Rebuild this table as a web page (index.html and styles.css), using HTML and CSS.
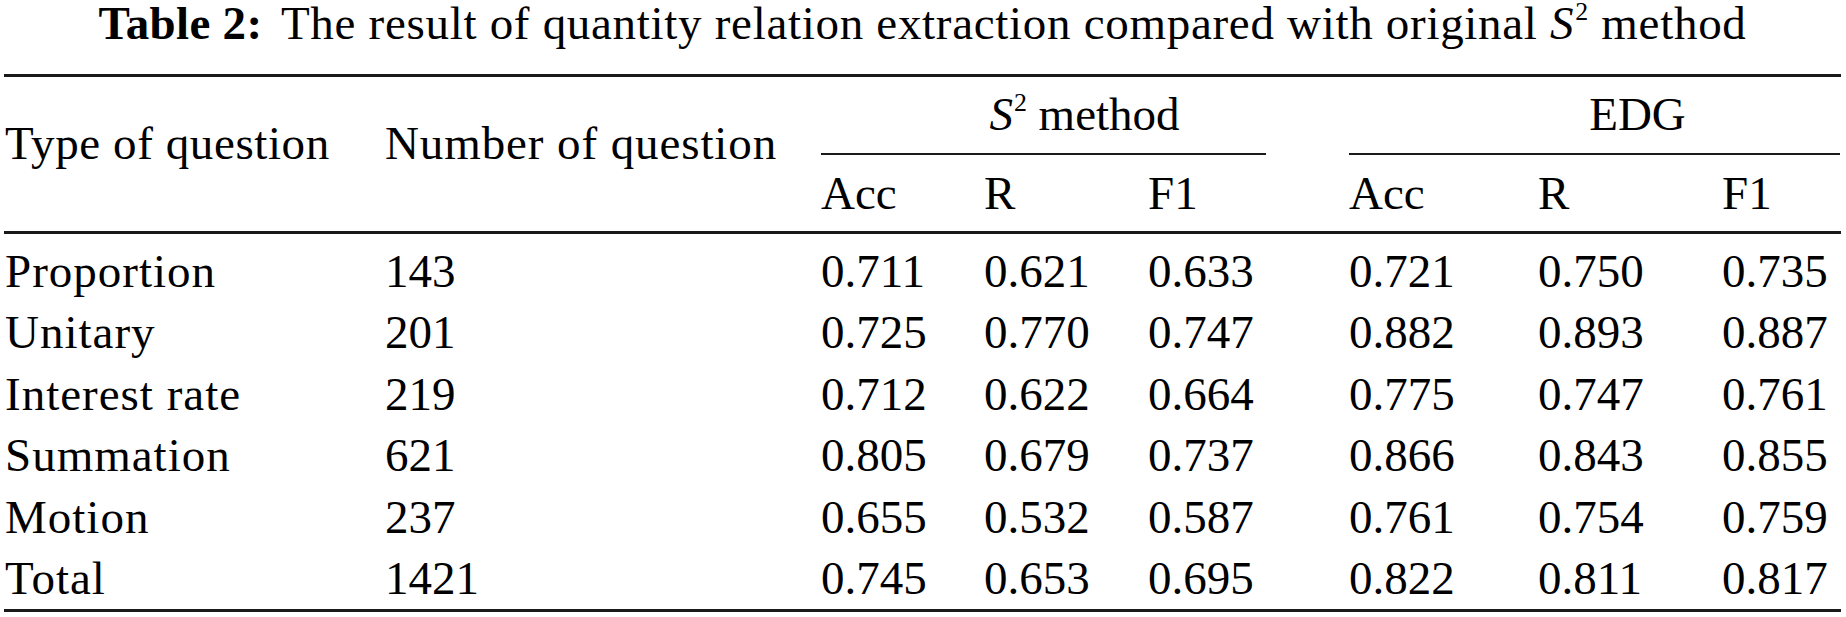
FILE: index.html
```html
<!DOCTYPE html>
<html lang="en">
<head>
<meta charset="utf-8">
<title>Table 2</title>
<link rel="stylesheet" href="styles.css">
</head>
<body>
<div class="page">
  <div class="caption"><b class="cap-label">Table 2:</b> The result of quantity relation extraction compared with original <i>S</i><sup>2</sup> method</div>
  <div class="table">
    <div class="thead">
      <div class="h-type">Type of question</div>
      <div class="h-num">Number of question</div>
      <div class="grp grp-s2"><i>S</i><sup>2</sup> method</div>
      <div class="grp grp-edg">EDG</div>
      <div class="sub c3">Acc</div>
      <div class="sub c4">R</div>
      <div class="sub c5">F1</div>
      <div class="sub c6">Acc</div>
      <div class="sub c7">R</div>
      <div class="sub c8">F1</div>
    </div>
    <div class="tbody">
      <div class="row"><span class="c1">Proportion</span><span>143</span><span>0.711</span><span>0.621</span><span>0.633</span><span>0.721</span><span>0.750</span><span>0.735</span></div>
      <div class="row"><span class="c1">Unitary</span><span>201</span><span>0.725</span><span>0.770</span><span>0.747</span><span>0.882</span><span>0.893</span><span>0.887</span></div>
      <div class="row"><span class="c1">Interest rate</span><span>219</span><span>0.712</span><span>0.622</span><span>0.664</span><span>0.775</span><span>0.747</span><span>0.761</span></div>
      <div class="row"><span class="c1">Summation</span><span>621</span><span>0.805</span><span>0.679</span><span>0.737</span><span>0.866</span><span>0.843</span><span>0.855</span></div>
      <div class="row"><span class="c1">Motion</span><span>237</span><span>0.655</span><span>0.532</span><span>0.587</span><span>0.761</span><span>0.754</span><span>0.759</span></div>
      <div class="row"><span class="c1">Total</span><span>1421</span><span>0.745</span><span>0.653</span><span>0.695</span><span>0.822</span><span>0.811</span><span>0.817</span></div>
    </div>
  </div>
</div>
</body>
</html>
```

FILE: styles.css
```css
html, body {
  margin: 0;
  padding: 0;
  background: #ffffff;
}

body {
  font-family: "Liberation Serif", "Times New Roman", serif;
  font-size: 47px;
  color: #000;
}

.page {
  width: 1837px;
  padding-left: 4px;
}

.caption {
  text-align: center;
  line-height: 47px;
  height: 47px;
  margin-bottom: 27px;
  white-space: nowrap;
  letter-spacing: 0.7px;
}

.cap-label {
  font-weight: bold;
  margin-right: 7px;
  letter-spacing: 0.3px;
}

sup {
  font-size: 0.55em;
  line-height: 0;
  vertical-align: 0.72em;
  margin-left: 1px;
}

.table {
  border-top: 3px solid #1a1a1a;
  border-bottom: 3px solid #1a1a1a;
}

.thead,
.row {
  display: grid;
  grid-template-columns: 381px 436px 163px 164px 201px 189px 184px 1fr;
}

.thead {
  grid-template-rows: 78px 76px;
  border-bottom: 3px solid #1a1a1a;
}

.h-type,
.h-num {
  grid-row: 1 / span 2;
  line-height: 56px;
  padding-top: 38px;
  white-space: nowrap;
  letter-spacing: 0.9px;
}

.h-type {
  grid-column: 1;
  padding-left: 1px;
  letter-spacing: 0.6px;
}

.h-num {
  grid-column: 2;
}

.grp {
  grid-row: 1;
  line-height: 56px;
  padding-top: 9px;
  text-align: center;
  border-bottom: 2px solid #1a1a1a;
  box-sizing: border-box;
  height: 78px;
  white-space: nowrap;
}

.grp-s2 {
  grid-column: 3 / span 3;
  margin-right: 83px;
  padding-left: 82px;
}

.grp-edg {
  grid-column: 6 / span 3;
  padding-left: 86px;
  margin-right: 1px;
}

.sub {
  grid-row: 2;
  line-height: 56px;
  padding-top: 10px;
}

.c3 { grid-column: 3; }
.c4 { grid-column: 4; }
.c5 { grid-column: 5; }
.c6 { grid-column: 6; }
.c7 { grid-column: 7; }
.c8 { grid-column: 8; }

.tbody {
  padding-top: 7px;
}

.row {
  line-height: 61.4px;
  white-space: nowrap;
}

.row .c1 {
  padding-left: 1px;
  letter-spacing: 1px;
}
```
